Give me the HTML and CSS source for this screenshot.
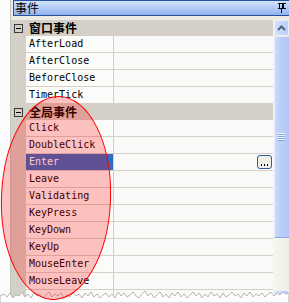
FILE: index.html
```html
<!DOCTYPE html>
<html>
<head>
<meta charset="utf-8">
<link rel="stylesheet" href="styles.css">
</head>
<body>
<div class="page">
  <div class="frame">
    <div class="titlebar">
      <span class="title-text">事件</span>
      <svg class="pin" width="8" height="10" viewBox="0 0 8 10">
        <rect x="0" y="0" width="8" height="1" fill="#000"/>
        <rect x="1" y="0" width="1" height="6" fill="#000"/>
        <rect x="4" y="0" width="2" height="6" fill="#000"/>
        <rect x="0" y="5" width="8" height="1" fill="#000"/>
        <rect x="3" y="6" width="1" height="4" fill="#000"/>
      </svg>
    </div>
    <div class="body">
      <div class="grid">
        <div class="cat"><span class="box"></span><span class="cat-label">窗口事件</span></div>
        <div class="row"><div class="margin"></div><div class="name">AfterLoad</div><div class="val"></div></div>
        <div class="row"><div class="margin"></div><div class="name">AfterClose</div><div class="val"></div></div>
        <div class="row"><div class="margin"></div><div class="name">BeforeClose</div><div class="val"></div></div>
        <div class="row"><div class="margin"></div><div class="name">TimerTick</div><div class="val"></div></div>
        <div class="cat"><span class="box"></span><span class="cat-label">全局事件</span></div>
        <div class="row"><div class="margin"></div><div class="name">Click</div><div class="val"></div></div>
        <div class="row"><div class="margin"></div><div class="name">DoubleClick</div><div class="val"></div></div>
        <div class="row selected"><div class="margin"></div><div class="name">Enter</div><div class="val"><span class="dots"><svg width="13" height="12" viewBox="0 0 13 12"><rect x="3" y="8" width="1" height="2" fill="#000"/><rect x="6" y="8" width="1" height="2" fill="#000"/><rect x="9" y="8" width="1" height="2" fill="#000"/></svg></span></div></div>
        <div class="row"><div class="margin"></div><div class="name">Leave</div><div class="val"></div></div>
        <div class="row"><div class="margin"></div><div class="name">Validating</div><div class="val"></div></div>
        <div class="row"><div class="margin"></div><div class="name">KeyPress</div><div class="val"></div></div>
        <div class="row"><div class="margin"></div><div class="name">KeyDown</div><div class="val"></div></div>
        <div class="row"><div class="margin"></div><div class="name">KeyUp</div><div class="val"></div></div>
        <div class="row"><div class="margin"></div><div class="name">MouseEnter</div><div class="val"></div></div>
        <div class="row"><div class="margin"></div><div class="name">MouseLeave</div><div class="val"></div></div>
        <div class="row"><div class="margin"></div><div class="name"></div><div class="val"></div></div>
      </div>
      <div class="scroll">
        <div class="sbtn">
          <svg width="9" height="6" viewBox="0 0 9 6"><polyline points="1,5 4.5,1.5 8,5" fill="none" stroke="#4d6185" stroke-width="2"/></svg>
        </div>
        <div class="thumb"><span class="grip"></span></div>
        <div class="track"></div>
        <div class="sbtn down"></div>
      </div>
    </div>
  </div>
  <svg class="ellipse" width="289" height="303" viewBox="0 0 289 303">
    <ellipse cx="56" cy="198" rx="54.5" ry="101.5" transform="rotate(2 56 198)" fill="rgba(255,0,0,0.23)" stroke="#ff0000" stroke-width="1"/>
  </svg>
  <svg class="torn" width="289" height="303" viewBox="0 0 289 303">
    <polygon points="0,303 0,296 4,294 7,297 10,293 13,298 16,295 19,296 22,292 25,297 28,294 31,298 34,293 37,296 40,294 43,298 46,295 49,292 52,297 55,294 58,296 61,293 64,298 67,295 70,297 73,292 76,296 79,294 82,298 85,293 88,296 91,292 94,297 97,294 100,298 103,295 106,293 109,297 112,294 115,298 118,292 121,296 124,293 127,297 130,295 133,292 136,296 139,298 142,294 145,291 148,296 151,293 154,298 157,295 160,292 163,297 166,294 169,298 172,293 175,296 178,292 181,297 184,294 187,298 190,295 193,292 196,296 199,293 202,298 205,294 208,297 211,292 214,296 217,294 220,298 223,293 226,297 229,295 232,292 235,296 238,294 241,298 244,293 247,296 250,292 253,297 256,294 259,296 262,293 265,297 268,294 271,292 274,296 277,293 280,295 283,292 286,294 289,293 289,303" fill="#ffffff" stroke="#b4b4b4" stroke-width="1"/>
  </svg>
</div>
</body>
</html>
```
FILE: styles.css
```css
html, body {
  margin: 0;
  padding: 0;
  background: #ffffff;
}
.page {
  position: relative;
  width: 289px;
  height: 303px;
  overflow: hidden;
  background: #fbfbfb;
  padding-left: 10px;
  box-sizing: border-box;
}
.frame {
  height: 303px;
  border-left: 1px solid #c4c4c0;
  background: #ecebe5;
  display: flex;
  flex-direction: column;
}
.titlebar {
  margin-left: 2px;
  height: 16px;
  box-sizing: border-box;
  border: 1px solid #24509c;
  border-right: none;
  background: linear-gradient(to bottom, #d3e2fb 0%, #b6cef6 45%, #8fb2ee 100%);
  display: flex;
  align-items: center;
  justify-content: space-between;
  padding-left: 1px;
  padding-right: 3px;
}
.title-text {
  font-family: "Noto Sans CJK SC", sans-serif;
  font-size: 12px;
  line-height: 14px;
  color: #000;
}
.pin {
  display: block;
}
.body {
  margin-top: 4px;
  flex: 1;
  display: flex;
  min-height: 0;
}
.grid {
  width: 262px;
  display: flex;
  flex-direction: column;
  background: #d4d0c8;
}
.cat {
  height: 18px;
  display: flex;
  align-items: center;
  background: #d4d0c8;
}
.box {
  width: 9px;
  height: 9px;
  box-sizing: border-box;
  border: 1px solid #3a3a3a;
  margin-left: 3px;
  position: relative;
  background: #d4d0c8;
}
.box::after {
  content: "";
  position: absolute;
  left: 1px;
  top: 3px;
  width: 5px;
  height: 1px;
  background: #000;
}
.cat-label {
  margin-left: 6px;
  font-family: "Noto Sans CJK SC", sans-serif;
  font-weight: 700;
  font-size: 12px;
  line-height: 16px;
  color: #000;
}
.row {
  height: 17px;
  display: grid;
  grid-template-columns: 15px 87px 1fr;
}
.margin {
  background: #d4d0c8;
}
.name {
  background: #fbfbf9;
  border-bottom: 1px solid #d4d0c8;
  padding-left: 3px;
  font-family: "DejaVu Sans Mono", monospace;
  font-size: 10px;
  line-height: 16px;
  color: #000;
  white-space: nowrap;
  overflow: hidden;
}
.val {
  background: #f9f9f7;
  border-bottom: 1px solid #d4d0c8;
  border-left: 1px solid #d4d0c8;
  display: flex;
  align-items: center;
  justify-content: flex-end;
  padding-right: 1px;
}
.selected .name {
  background: #316ac5;
  color: #ffffff;
}
.dots {
  width: 15px;
  height: 14px;
  box-sizing: border-box;
  border: 1px solid #2f5e9a;
  border-radius: 3px;
  background: #f1f0e8;
  display: block;
}
.dots svg {
  display: block;
}
.scroll {
  width: 16px;
  border-left: 1px solid #f6f6f2;
  box-sizing: border-box;
  display: flex;
  flex-direction: column;
  background: #eeede5;
}
.sbtn {
  height: 16px;
  box-sizing: border-box;
  border: 1px solid #e8eefc;
  border-radius: 2px;
  background: linear-gradient(to right, #d4e1fc, #bccefa);
  display: flex;
  align-items: center;
  justify-content: center;
  flex-shrink: 0;
}
.thumb {
  margin-top: 1px;
  height: 201px;
  box-sizing: border-box;
  border-left: 1px solid #e4ebfd;
  border-bottom: 1px solid #8eaae4;
  background: linear-gradient(to right, #cddafb, #b9cdf9 40%, #b4c8f8);
  display: flex;
  align-items: center;
  justify-content: center;
  flex-shrink: 0;
}
.grip {
  width: 7px;
  height: 8px;
  background: repeating-linear-gradient(to bottom, #eef3ff 0, #eef3ff 1px, #8ca6de 1px, #8ca6de 2px);
  margin-left: -2px;
}
.track {
  height: 52px;
  background: linear-gradient(to right, #f6f6f0, #eeede5);
  flex-shrink: 0;
}
.ellipse, .torn {
  position: absolute;
  left: 0;
  top: 0;
  pointer-events: none;
}
.torn {
  z-index: 1;
}
.ellipse {
  z-index: 2;
}
```
